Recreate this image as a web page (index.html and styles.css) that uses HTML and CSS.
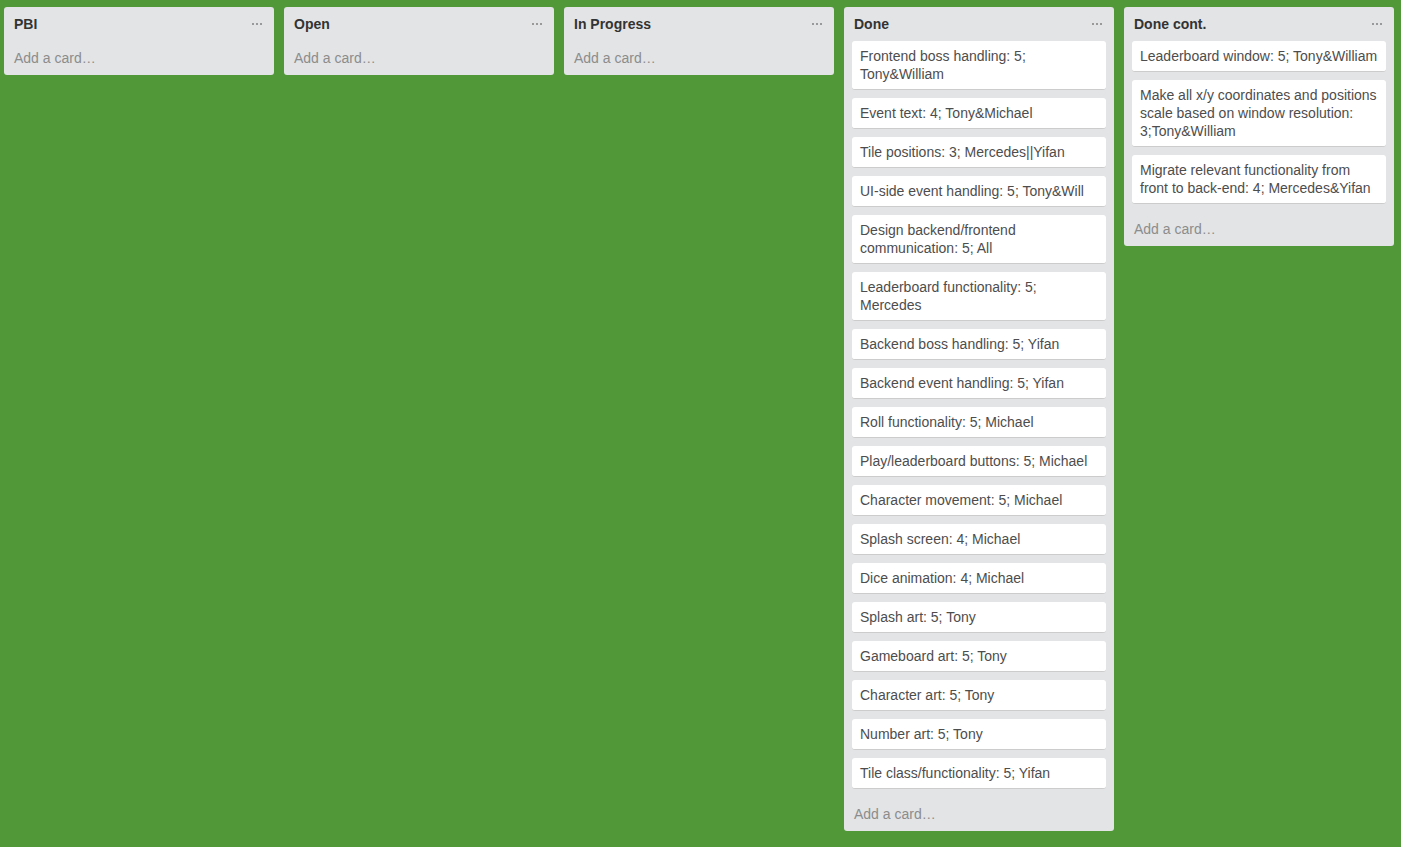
FILE: index.html
```html
<!DOCTYPE html>
<html>
<head>
<meta charset="utf-8">
<link rel="stylesheet" href="styles.css">
</head>
<body>
<div class="board">
  <div class="list">
    <div class="list-header"><span class="list-title">PBI</span><span class="menu"><i></i><i></i><i></i></span></div>
    <div class="add">Add a card…</div>
  </div>
  <div class="list">
    <div class="list-header"><span class="list-title">Open</span><span class="menu"><i></i><i></i><i></i></span></div>
    <div class="add">Add a card…</div>
  </div>
  <div class="list">
    <div class="list-header"><span class="list-title">In Progress</span><span class="menu"><i></i><i></i><i></i></span></div>
    <div class="add">Add a card…</div>
  </div>
  <div class="list">
    <div class="list-header"><span class="list-title">Done</span><span class="menu"><i></i><i></i><i></i></span></div>
    <div class="cards">
      <div class="card">Frontend boss handling: 5; Tony&amp;William</div>
      <div class="card">Event text: 4; Tony&amp;Michael</div>
      <div class="card">Tile positions: 3; Mercedes||Yifan</div>
      <div class="card">UI-side event handling: 5; Tony&amp;Will</div>
      <div class="card">Design backend/frontend communication: 5; All</div>
      <div class="card">Leaderboard functionality: 5; Mercedes</div>
      <div class="card">Backend boss handling: 5; Yifan</div>
      <div class="card">Backend event handling: 5; Yifan</div>
      <div class="card">Roll functionality: 5; Michael</div>
      <div class="card">Play/leaderboard buttons: 5; Michael</div>
      <div class="card">Character movement: 5; Michael</div>
      <div class="card">Splash screen: 4; Michael</div>
      <div class="card">Dice animation: 4; Michael</div>
      <div class="card">Splash art: 5; Tony</div>
      <div class="card">Gameboard art: 5; Tony</div>
      <div class="card">Character art: 5; Tony</div>
      <div class="card">Number art: 5; Tony</div>
      <div class="card">Tile class/functionality: 5; Yifan</div>
    </div>
    <div class="add">Add a card…</div>
  </div>
  <div class="list">
    <div class="list-header"><span class="list-title">Done cont.</span><span class="menu"><i></i><i></i><i></i></span></div>
    <div class="cards">
      <div class="card">Leaderboard window: 5; Tony&amp;William</div>
      <div class="card">Make all x/y coordinates and positions scale based on window resolution: 3;Tony&amp;William</div>
      <div class="card">Migrate relevant functionality from front to back-end: 4; Mercedes&amp;Yifan</div>
    </div>
    <div class="add">Add a card…</div>
  </div>
</div>
</body>
</html>
```

FILE: styles.css
```css
html, body {
  margin: 0;
  padding: 0;
}
body {
  background: #519839;
  font-family: "Liberation Sans", Arial, sans-serif;
  font-size: 14px;
  line-height: 18px;
  color: #4d4d4d;
  width: 1401px;
  height: 847px;
  overflow: hidden;
}
.board {
  display: flex;
  align-items: flex-start;
  gap: 10px;
  padding: 7px 4px 0 4px;
}
.list {
  width: 270px;
  flex: 0 0 270px;
  background: #e2e4e6;
  border-radius: 3px;
  box-sizing: border-box;
}
.list-header {
  display: flex;
  align-items: center;
  justify-content: space-between;
  padding: 8px 10px;
  height: 18px;
}
.list-title {
  font-weight: bold;
  color: #333;
}
.menu {
  display: flex;
  gap: 2px;
  margin-right: 2px;
}
.menu i {
  display: block;
  width: 2px;
  height: 2px;
  background: #999;
}
.cards {
  padding: 0 8px;
}
.card {
  background: #fff;
  border-radius: 3px;
  border-bottom: 1px solid #ccc;
  padding: 6px 8px 6px 8px;
  margin-bottom: 8px;
  color: #4d4d4d;
}
.add {
  padding: 8px 10px;
  color: #8c8c8c;
}
```
